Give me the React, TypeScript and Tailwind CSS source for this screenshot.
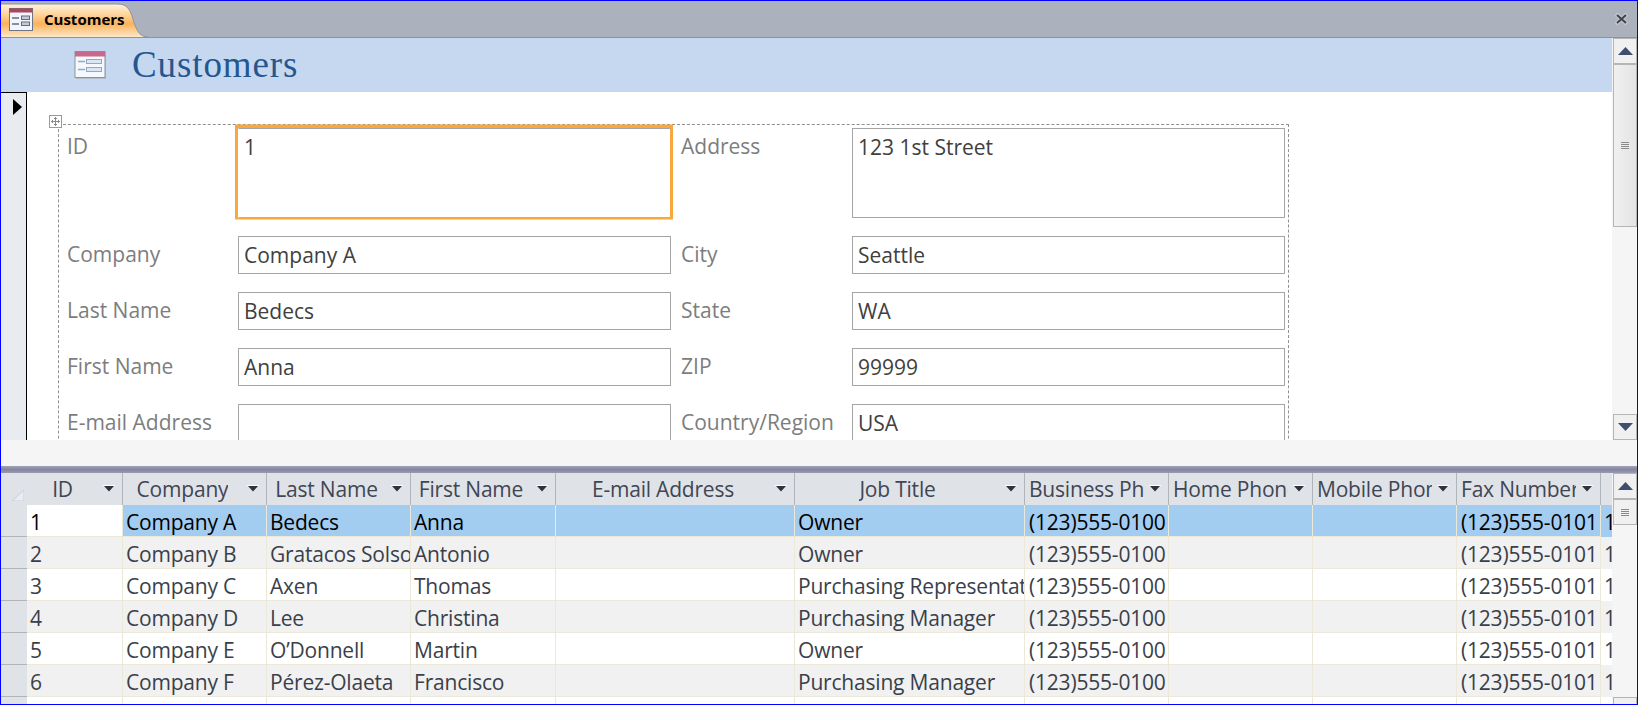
const sans = "font-['Open_Sans','Noto_Sans',sans-serif]"

const columns = [
  { title: 'ID', width: 'w-[96px]', center: true },
  { title: 'Company', width: 'w-[144px]', center: true },
  { title: 'Last Name', width: 'w-[144px]', center: true },
  { title: 'First Name', width: 'w-[145px]', center: true },
  { title: 'E-mail Address', width: 'w-[239px]', center: true },
  { title: 'Job Title', width: 'w-[230px]', center: true },
  { title: 'Business Phone', width: 'w-[144px]', center: false },
  { title: 'Home Phone', width: 'w-[144px]', center: false },
  { title: 'Mobile Phone', width: 'w-[144px]', center: false },
  { title: 'Fax Number', width: 'w-[144px]', center: false },
]

const rows = [
  ['1', 'Company A', 'Bedecs', 'Anna', '', 'Owner'],
  ['2', 'Company B', 'Gratacos Solsona', 'Antonio', '', 'Owner'],
  ['3', 'Company C', 'Axen', 'Thomas', '', 'Purchasing Representative'],
  ['4', 'Company D', 'Lee', 'Christina', '', 'Purchasing Manager'],
  ['5', 'Company E', 'O’Donnell', 'Martin', '', 'Owner'],
  ['6', 'Company F', 'Pérez-Olaeta', 'Francisco', '', 'Purchasing Manager'],
  ['', '', '', '', '', ''],
]

function TabIcon() {
  return (
    <svg width="24" height="24" viewBox="0 0 24 24" className="shrink-0">
      <rect x="0.5" y="1.5" width="23" height="22" fill="#f2f5fa" stroke="#6d7686" />
      <rect x="0.5" y="1.5" width="23" height="4" fill="#a8475f" />
      <line x1="3" y1="11" x2="10" y2="11" stroke="#5f6c85" strokeWidth="1.5" />
      <line x1="3" y1="17" x2="10" y2="17" stroke="#5f6c85" strokeWidth="1.5" />
      <rect x="12.5" y="9" width="8" height="3.5" fill="#c4ccd8" stroke="#5f6c85" />
      <rect x="12.5" y="15" width="8" height="3.5" fill="#c4ccd8" stroke="#5f6c85" />
    </svg>
  )
}

function FormIcon() {
  return (
    <svg width="32" height="28" viewBox="0 0 32 28" className="shrink-0">
      <rect x="2" y="2" width="30" height="26" fill="#b4bccb" />
      <rect x="1" y="0.5" width="30" height="26" fill="#f6f8fc" stroke="#8a93a6" />
      <rect x="1" y="0.5" width="30" height="5" fill="#c8688c" />
      <line x1="4" y1="10.5" x2="11" y2="10.5" stroke="#8fa8cc" strokeWidth="1.5" />
      <line x1="4" y1="18.5" x2="11" y2="18.5" stroke="#8fa8cc" strokeWidth="1.5" />
      <rect x="12.5" y="8.5" width="15" height="4" fill="#dbe6f4" stroke="#8fa8cc" />
      <rect x="12.5" y="16.5" width="15" height="4" fill="#dbe6f4" stroke="#8fa8cc" />
    </svg>
  )
}

function Field({ label, value, tall, focus }: { label: string; value: string; tall?: boolean; focus?: boolean }) {
  return (
    <>
      <div className="text-[21px] leading-[28px] text-[#7d7d7d] pt-[4px] whitespace-nowrap">{label}</div>
      <div
        className={`${tall ? 'h-[90px]' : 'h-[38px]'} ${
          focus ? 'shadow-[-0.5px_-1px_0_2.5px_#f9a83e] border-[#f9a83e] border-t-[#a5a5a5] border-l-white' : 'border-[#a5a5a5]'
        } w-[433px] border px-[5px] pt-[4px] text-[21px] leading-[28px] text-[#404040]`}
      >
        {value}
      </div>
    </>
  )
}

function ScrollButton({ up }: { up?: boolean }) {
  return (
    <div className="h-[26px] shrink-0 border border-[#b5b5b5] bg-[#f0f0f0] flex items-center justify-center">
      <svg width="15" height="8" viewBox="0 0 15 8">
        <path d={up ? 'M7.5 0 L15 8 L0 8 Z' : 'M0 0 L15 0 L7.5 8 Z'} fill="#3f4d6e" />
      </svg>
    </div>
  )
}

function Grip() {
  return (
    <div className="flex flex-col gap-[1px]">
      <div className="w-[8px] h-[1px] bg-[#8a8a8a]" />
      <div className="w-[8px] h-[1px] bg-[#8a8a8a]" />
      <div className="w-[8px] h-[1px] bg-[#8a8a8a]" />
      <div className="w-[8px] h-[1px] bg-[#8a8a8a]" />
    </div>
  )
}

function FilterArrow() {
  return (
    <svg width="12" height="7" viewBox="0 0 12 7" className="absolute right-[7px] top-[12px]">
      <line x1="0" y1="0.5" x2="12" y2="0.5" stroke="#fff" />
      <path d="M1 1 H11 L6 6.5 Z" fill="#2f3238" />
    </svg>
  )
}

export default function App() {
  return (
    <div className={`w-[1638px] h-[705px] overflow-hidden flex flex-col border border-[#0000ff] bg-white ${sans}`}>
      <div className="h-[37px] shrink-0 bg-[#abb2bd] border-b border-[#8d939c] flex items-stretch justify-between">
        <div className="relative w-[147px] flex items-center gap-[11px] pl-[8px]">
          <svg width="147" height="36" viewBox="0 0 147 36" className="absolute left-0 top-0">
            <defs>
              <linearGradient id="tabFill" x1="0" y1="0" x2="0" y2="1">
                <stop offset="0" stopColor="#fdf3df" />
                <stop offset="0.3" stopColor="#fdd79f" />
                <stop offset="0.6" stopColor="#fbb25c" />
                <stop offset="1" stopColor="#fde8c8" />
              </linearGradient>
            </defs>
            <path d="M0 3 H116 C127 3 129 9 132 18 C135 28 138 36 147 36 H0 Z" fill="url(#tabFill)" />
            <path d="M0 3 H116 C127 3 129 9 132 18 C135 28 138 36 147 36" fill="none" stroke="#8d939c" />
          </svg>
          <div className="relative flex items-center gap-[11px]">
            <TabIcon />
            <span className="text-[15px] font-bold text-black">Customers</span>
          </div>
        </div>
        <div className="pr-[8px] flex items-center">
          <svg width="15" height="14" viewBox="0 0 15 14">
            <path d="M2 2 L13 12 M13 2 L2 12" stroke="#c3c8d0" strokeWidth="4" />
            <path d="M3 3 L12 11 M12 3 L3 11" stroke="#3f434b" strokeWidth="2" />
          </svg>
        </div>
      </div>

      <div className="flex-1 flex min-h-0">
        <div className="flex-1 flex flex-col min-w-0">
          <div className="h-[54px] shrink-0 bg-[#c6d8ef] flex items-center pl-[73px] gap-[26px]">
            <FormIcon />
            <span className="text-[37px] leading-[40px] text-[#24568f] font-['Liberation_Serif',serif] tracking-[0.9px]">Customers</span>
          </div>
          <div className="flex-1 flex min-h-0">
            <div className="w-[26px] shrink-0 bg-[#e8ebef] border-t border-r border-black pt-[6px] pl-[12px]">
              <svg width="10" height="16" viewBox="0 0 10 16">
                <path d="M0 0 L9 8 L0 16 Z" fill="#000" />
              </svg>
            </div>
            <div className="flex-1 pl-[31px] pt-[32px] relative overflow-hidden">
              <div className="absolute left-[22px] top-[23px] w-[13px] h-[13px] border border-[#9a9a9a] bg-white flex items-center justify-center">
                <svg width="9" height="9" viewBox="0 0 9 9">
                  <path d="M4.5 0 V9 M0 4.5 H9 M3 1.5 H6 M3 7.5 H6 M1.5 3 V6 M7.5 3 V6" stroke="#8a8a8a" />
                </svg>
              </div>
              <div className="w-[1231px] h-[400px] border-t border-l border-r border-dashed border-[#909090] pl-[8px] pt-[3px] grid grid-cols-[171px_443px_171px_433px] gap-y-[18px] auto-rows-min">
                <Field label="ID" value="1" tall focus />
                <Field label="Address" value="123 1st Street" tall />
                <Field label="Company" value="Company A" />
                <Field label="City" value="Seattle" />
                <Field label="Last Name" value="Bedecs" />
                <Field label="State" value="WA" />
                <Field label="First Name" value="Anna" />
                <Field label="ZIP" value="99999" />
                <Field label="E-mail Address" value="" />
                <Field label="Country/Region" value="USA" />
              </div>
            </div>
          </div>
        </div>
        <div className="w-[25px] shrink-0 bg-[#f5f5f5] flex flex-col pl-[1px]">
          <ScrollButton up />
          <div className="h-[163px] shrink-0 border border-[#b5b5b5] bg-gradient-to-r from-[#f0f0f0] to-[#e4e4e4] flex items-center justify-center">
            <Grip />
          </div>
          <div className="flex-1" />
          <ScrollButton />
        </div>
      </div>

      <div className="h-[26px] shrink-0 bg-[#f5f5f5]" />
      <div className="h-[7px] shrink-0 bg-gradient-to-b from-[#a2a3b6] via-[#84859f] to-[#9a9bb0]" />

      <div className="h-[231px] shrink-0 flex">
        <div className="flex-1 min-w-0 overflow-hidden text-[21px] tracking-[-0.2px]">
          <div className="flex h-[32px] bg-[#dfe2e7] text-[#404654]">
            <div className="w-[26px] shrink-0 relative">
              <svg width="12" height="11" viewBox="0 0 12 11" className="absolute left-[11px] top-[17px]">
                <path d="M12 0 V11 H0 Z" fill="#e9ecf1" stroke="#c4cede" />
              </svg>
            </div>
            {columns.map((c) => (
              <div key={c.title} className={`${c.width} shrink-0 border-r border-[#b0b5bc] relative flex items-center ${c.center ? 'justify-center pr-[24px]' : 'pl-[4px]'} overflow-hidden`}>
                <span className={`whitespace-nowrap block overflow-hidden leading-[28px] ${c.center ? '' : 'max-w-[115px]'}`}>{c.title}</span>
                <FilterArrow />
              </div>
            ))}
            <div className="flex-1" />
          </div>
          {rows.map((r, i) => (
            <div key={i} className={`flex h-[32px] ${i % 2 === 1 ? 'bg-[#f1f1f1]' : 'bg-white'} ${i === 0 ? 'text-black' : 'text-[#3a3f4a]'}`}>
              <div className="w-[26px] shrink-0 bg-[#dfe2e7] border-b border-[#b0b5bc]" />
              {columns.map((c, j) => (
                <div
                  key={c.title}
                  className={`${c.width} shrink-0 border-r border-b border-[#ece9d8] ${j < 6 ? 'pl-[3px]' : 'pl-[4px]'} pr-[1px] pt-[1px] overflow-hidden whitespace-nowrap leading-[33px] ${i === 0 && j > 0 ? 'bg-[#a2ccf0]' : ''}`}
                >
                  {j < 6 ? r[j] : i < 6 && (j === 6 || j === 9) ? (j === 6 ? '(123)555-0100' : '(123)555-0101') : ''}
                </div>
              ))}
              <div className={`flex-1 pl-[3px] pt-[1px] overflow-hidden whitespace-nowrap leading-[33px] ${i === 0 ? 'bg-[#a2ccf0]' : ''}`}>{i < 6 ? '1' : ''}</div>
            </div>
          ))}
        </div>
        <div className="w-[25px] shrink-0 bg-[#f5f5f5] flex flex-col pl-[1px]">
          <ScrollButton up />
          <div className="h-[26px] shrink-0 border border-[#b5b5b5] bg-[#f0f0f0] flex items-center justify-center">
            <Grip />
          </div>
          <div className="flex-1" />
          <div className="h-[7px] shrink-0 border border-b-0 border-[#b5b5b5] bg-[#f0f0f0]" />
        </div>
      </div>
    </div>
  )
}
